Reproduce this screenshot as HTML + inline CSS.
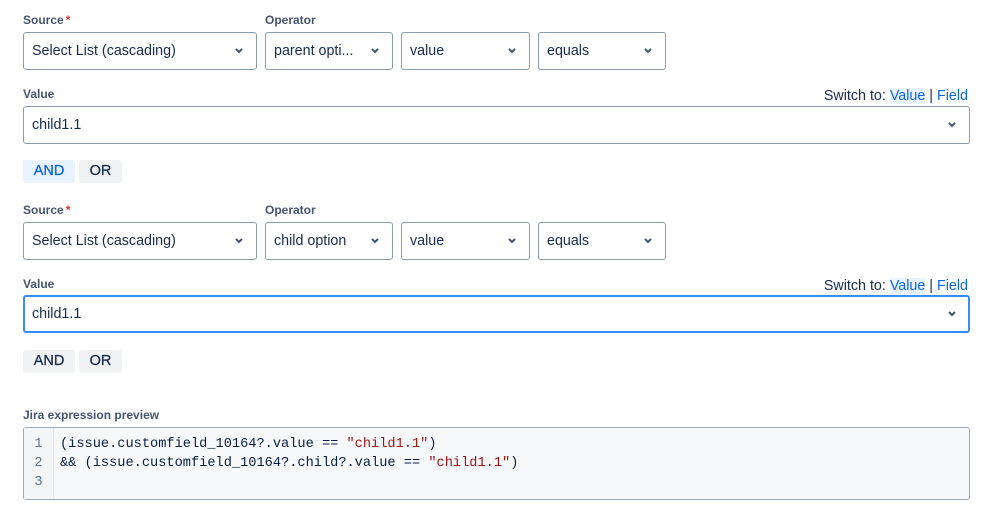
<!DOCTYPE html>
<html><head><meta charset="utf-8"><style>
*{box-sizing:border-box;margin:0;padding:0}
body{width:999px;height:528px;background:#fff;font-family:"Liberation Sans",Arial,sans-serif;color:#172b4d;position:relative;overflow:hidden}
.lbl{position:absolute;font-size:12px;font-weight:bold;color:#44546f}
.lbl .req{color:#c9372c;margin-left:2px}
.sel{position:absolute;height:38px;border:1px solid #8c9bab;border-radius:3px;font-size:14.3px;line-height:36px;padding-left:8px;color:#172b4d;background:#fff}
.sel svg{position:absolute;right:12px;top:14px}
.btn{position:absolute;height:23px;border-radius:3px;font-size:14.5px;line-height:23px;text-align:center;background:#f1f2f4;color:#172b4d;-webkit-text-stroke:0.3px}
.btn.on{background:#e9f2ff;color:#0c66e4}
.sw{position:absolute;right:31px;font-size:14.3px;color:#172b4d}
.sw a{color:#0c66e4;text-decoration:none}
.sw a.hl{background:#e9f2ff}
.code{position:absolute;left:23px;top:427px;width:947px;height:73px;border:1px solid #a0a8b3;border-radius:3px;background:#f7f8f9;font-family:"Liberation Mono","DejaVu Sans Mono",monospace;font-size:13.65px;line-height:19px}
.gut{position:absolute;left:0;top:0;width:30px;height:71px;border-right:1px solid #e4e6ea;background:#f4f5f7;color:#626f86;text-align:center;padding-top:7px}
.txt{position:absolute;left:36px;top:7px;color:#091e42;white-space:pre}
.s{color:#a31515}
</style></head><body>

<div class="lbl" style="left:23px;top:13px">Source<span class="req">*</span></div>
<div class="lbl" style="left:265px;top:13px">Operator</div>
<div class="sel" style="left:23px;top:32px;width:234px">Select List (cascading)<svg width="10" height="8" viewBox="0 0 10 8"><path d="M2 2l3 3 3-3" fill="none" stroke="#44546f" stroke-width="2"/></svg></div>
<div class="sel" style="left:265px;top:32px;width:128px">parent opti...<svg width="10" height="8" viewBox="0 0 10 8"><path d="M2 2l3 3 3-3" fill="none" stroke="#44546f" stroke-width="2"/></svg></div>
<div class="sel" style="left:401px;top:32px;width:129px">value<svg width="10" height="8" viewBox="0 0 10 8"><path d="M2 2l3 3 3-3" fill="none" stroke="#44546f" stroke-width="2"/></svg></div>
<div class="sel" style="left:538px;top:32px;width:128px">equals<svg width="10" height="8" viewBox="0 0 10 8"><path d="M2 2l3 3 3-3" fill="none" stroke="#44546f" stroke-width="2"/></svg></div>
<div class="lbl" style="left:23px;top:87px">Value</div>
<div class="sw" style="top:88px">Switch to: <a class="hl">Value</a> | <a>Field</a></div>
<div class="sel" style="left:23px;top:106px;width:947px;height:38px">child1.1<svg width="10" height="8" viewBox="0 0 10 8"><path d="M2 2l3 3 3-3" fill="none" stroke="#44546f" stroke-width="2"/></svg></div>
<div class="btn on" style="left:23px;top:160px;width:52px">AND</div>
<div class="btn" style="left:79px;top:160px;width:43px">OR</div>

<div class="lbl" style="left:23px;top:203px">Source<span class="req">*</span></div>
<div class="lbl" style="left:265px;top:203px">Operator</div>
<div class="sel" style="left:23px;top:222px;width:234px">Select List (cascading)<svg width="10" height="8" viewBox="0 0 10 8"><path d="M2 2l3 3 3-3" fill="none" stroke="#44546f" stroke-width="2"/></svg></div>
<div class="sel" style="left:265px;top:222px;width:128px">child option<svg width="10" height="8" viewBox="0 0 10 8"><path d="M2 2l3 3 3-3" fill="none" stroke="#44546f" stroke-width="2"/></svg></div>
<div class="sel" style="left:401px;top:222px;width:129px">value<svg width="10" height="8" viewBox="0 0 10 8"><path d="M2 2l3 3 3-3" fill="none" stroke="#44546f" stroke-width="2"/></svg></div>
<div class="sel" style="left:538px;top:222px;width:128px">equals<svg width="10" height="8" viewBox="0 0 10 8"><path d="M2 2l3 3 3-3" fill="none" stroke="#44546f" stroke-width="2"/></svg></div>
<div class="lbl" style="left:23px;top:277px">Value</div>
<div class="sw" style="top:278px">Switch to: <a class="hl">Value</a> | <a>Field</a></div>
<div class="sel" style="left:23px;top:295px;width:947px;height:38px;border:2px solid #388bff;line-height:34px;padding-left:7px">child1.1<svg width="10" height="8" viewBox="0 0 10 8" style="right:11px;top:13px"><path d="M2 2l3 3 3-3" fill="none" stroke="#44546f" stroke-width="2"/></svg></div>
<div class="btn" style="left:23px;top:350px;width:52px">AND</div>
<div class="btn" style="left:79px;top:350px;width:43px">OR</div>

<div class="lbl" style="left:23px;top:408px">Jira expression preview</div>
<div class="code"><div class="gut">1<br>2<br>3</div><div class="txt">(issue.customfield_10164?.value == <span class="s">"child1.1"</span>)
&amp;&amp; (issue.customfield_10164?.child?.value == <span class="s">"child1.1"</span>)
</div></div>
</body></html>
